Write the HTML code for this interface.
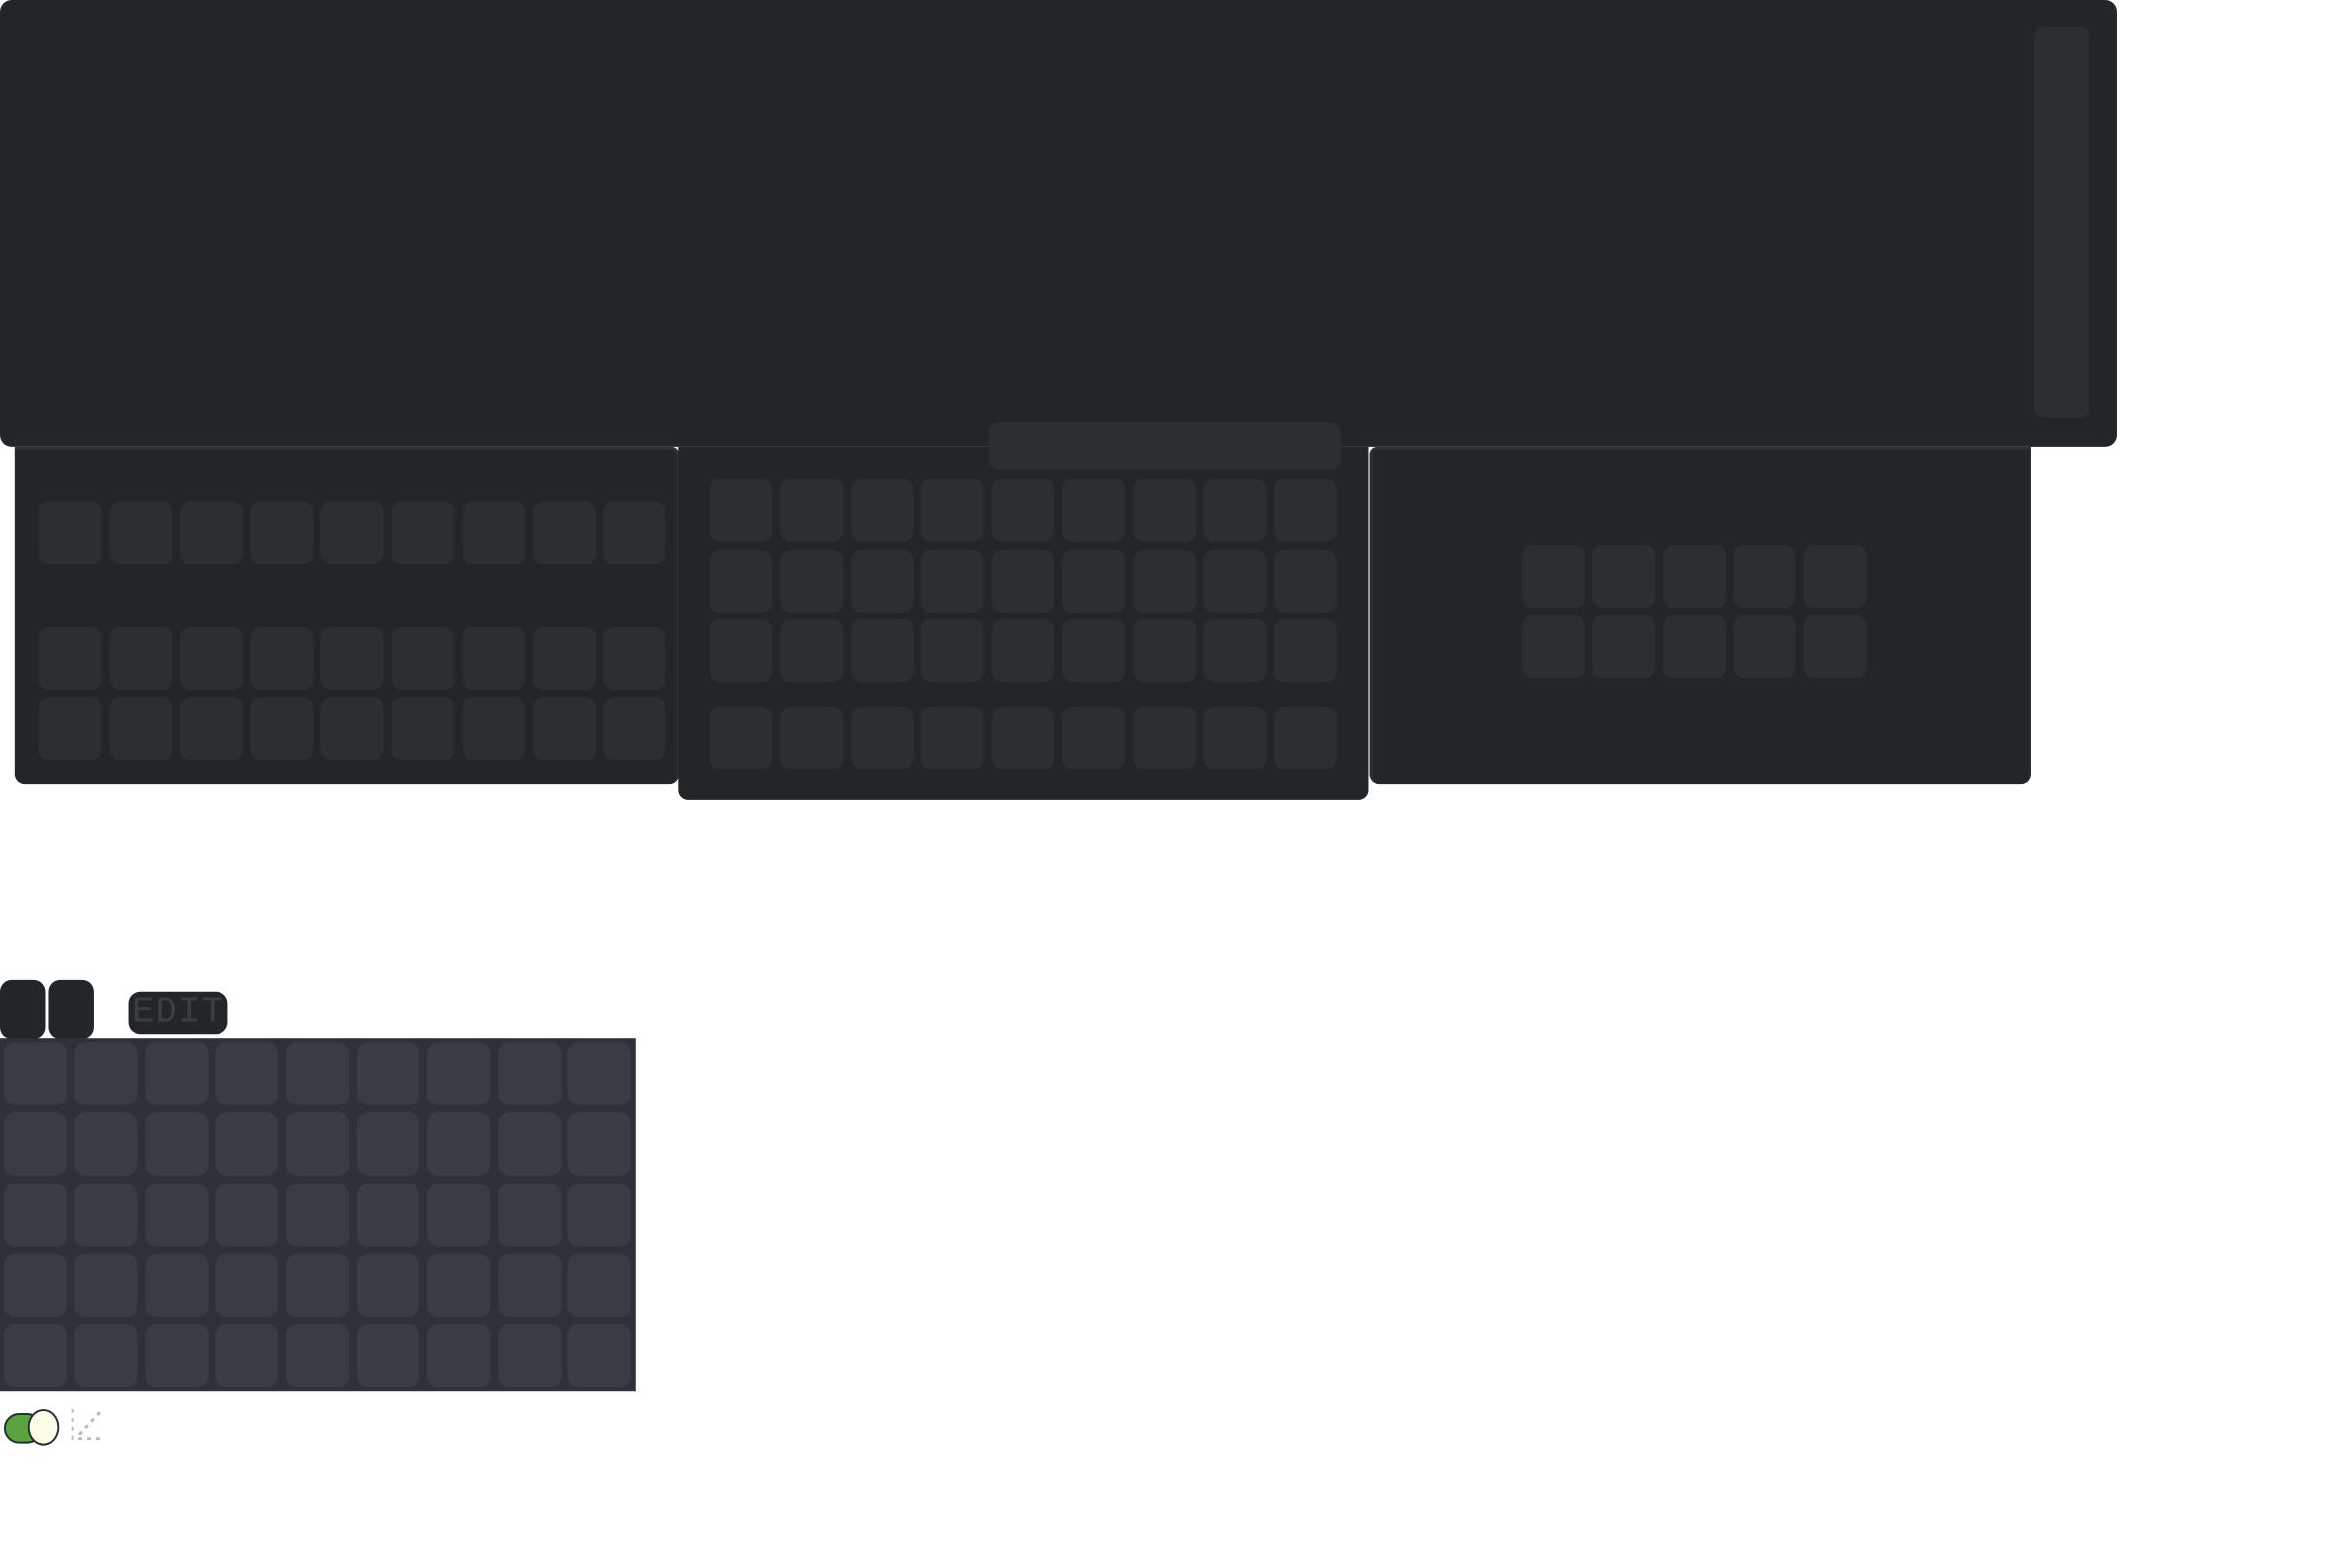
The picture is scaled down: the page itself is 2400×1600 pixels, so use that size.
<!DOCTYPE html>
<html><head><meta charset="utf-8"><style>
html,body{margin:0;padding:0;background:#fff;width:2400px;height:1600px;overflow:hidden;position:relative;font-family:"Liberation Mono",monospace}
#w{position:absolute;left:0;top:0;width:2400px;height:1600px;transform:scale(0.989);transform-origin:0 0}
#w div{position:absolute;box-sizing:border-box}
.p{background:#232629}
.c{background:#2b2e33;border-radius:11px;width:65px;height:65px}
.g{background:#393c45;border-radius:11px;width:65px;height:65px}
</style></head><body><div id="w">
<div class="p" style="left:0;top:0;width:2184px;height:461px;border-radius:12px"></div>
<div style="left:2099px;top:28px;width:57px;height:403px;background:#2b2e33;border-radius:10px"></div>
<div class="p" style="left:15px;top:461px;width:686px;height:348px;border-radius:0 8px 10px 10px;border-top:3px solid #2d3035;border-right:3px solid #2d3035"></div>
<div class="p" style="left:700px;top:461px;width:712px;height:364px;border-radius:0 0 10px 10px"></div>
<div class="p" style="left:1413px;top:461px;width:682px;height:348px;border-radius:8px 0 10px 10px;border-top:3px solid #2d3035;border-left:3px solid #2d3035"></div>
<div style="left:1020px;top:436px;width:363px;height:49px;background:#2b2e33;border-radius:10px"></div>
<div style="left:0;top:1011px;width:47px;height:61px;background:#232629;border-radius:12px"></div>
<div style="left:50px;top:1011px;width:47px;height:61px;background:#232629;border-radius:12px"></div>
<div style="left:133px;top:1023px;width:102px;height:44px;background:#232629;border-radius:12px;color:#3a3e42;font-size:38px;line-height:44px;text-align:center;letter-spacing:1px">EDIT</div>
<div style="left:0;top:1071px;width:656px;height:364px;background:#2e313a"></div>
<div style="left:4px;top:1458px;width:40px;height:31px;background:#5aa440;border:2px solid #243038;border-radius:16px"></div>
<div style="left:29px;top:1454px;width:32px;height:37px;background:#fdfde6;border:2px solid #243038;border-radius:50%"></div>
<svg style="position:absolute;left:70px;top:1446px" width="55" height="50"><path d="M5 8v30h30M12 34l24-26" stroke="#bbb" stroke-width="3" stroke-dasharray="4 5" fill="none"/></svg>
<div id="cells"></div>
</div>
<script>
var h='';
function grid(x0,ys,n,cls){ys.forEach(function(y){for(var i=0;i<n;i++)h+='<div class="'+cls+'" style="left:'+Math.round(x0+i*72.8)+'px;top:'+y+'px"></div>';});}
grid(40,[517,647,719],9,'c');
grid(732,[494,567,639,729],9,'c');
grid(1570,[562,635],5,'c');
grid(4,[1075,1148,1221,1294,1366],9,'g');
document.getElementById('cells').outerHTML=h;
</script>
</body></html>
